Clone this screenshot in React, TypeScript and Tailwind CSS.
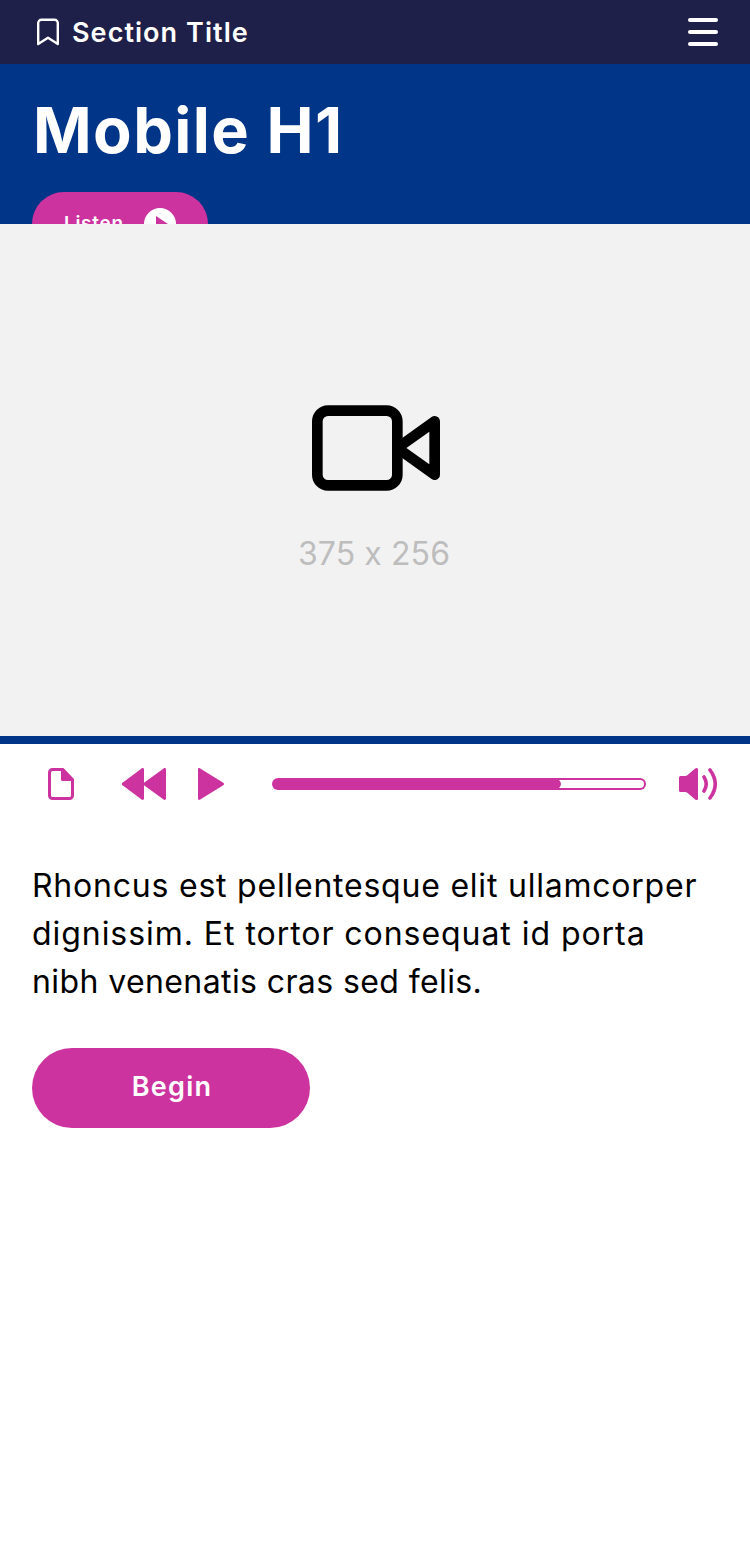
import React from 'react';

function BookmarkIcon() {
  return (
    <svg className="h-7 w-6 shrink-0" viewBox="0 0 24 28" fill="none" stroke="white" strokeWidth="2.4" strokeLinejoin="round">
      <path d="M2.2 26V5a3.2 3.2 0 0 1 3.2-3.2h13.2A3.2 3.2 0 0 1 21.8 5v21L12 19.8Z" />
    </svg>
  );
}

function VideoIcon() {
  return (
    <svg className="h-32 w-32" viewBox="0 0 24 24" fill="none" stroke="black" strokeWidth="2" strokeLinecap="round" strokeLinejoin="round">
      <path d="m23 7-7 5 7 5z" />
      <rect x="1" y="5" width="15" height="14" rx="2" />
    </svg>
  );
}

function PageIcon() {
  return (
    <svg className="h-8 w-[26px]" viewBox="0 0 26 32" fill="none">
      <path d="M4.5 1.5h10.3l9.7 10v16a3 3 0 0 1-3 3h-17a3 3 0 0 1-3-3v-23a3 3 0 0 1 3-3Z" stroke="#cd339f" strokeWidth="3" />
      <path d="M13 1h2.5L25 11v2H14.5a1.5 1.5 0 0 1-1.5-1.5Z" fill="#cd339f" />
    </svg>
  );
}

function RewindIcon() {
  return (
    <svg className="h-8 w-11" viewBox="0 0 44 32" fill="#cd339f">
      <path d="M.5 14.8 19.6.4C20.8-.4 22 .2 22 1.5v13.2L41.6.4C42.8-.4 44 .2 44 1.5v29c0 1.3-1.2 1.9-2.4 1.1L22 17.3v13.2c0 1.3-1.2 1.9-2.4 1.1L.5 17.2a1.5 1.5 0 0 1 0-2.4Z" />
    </svg>
  );
}

function PlayIcon() {
  return (
    <svg className="h-8 w-[26px]" viewBox="0 0 26 32" fill="#cd339f">
      <path d="M0 1.5C0 .2 1 -.4 2.2.4l23.1 14.4a1.4 1.4 0 0 1 0 2.4L2.2 31.6C1 32.4 0 31.8 0 30.5Z" />
    </svg>
  );
}

function VolumeIcon() {
  return (
    <svg className="h-8 w-[39px]" viewBox="0 0 39 32" fill="none">
      <path d="M1.5 8h4.8q1.2 0 2-.8L16.2.6c1.2-1.1 2.8-.5 2.8 1v28.8c0 1.5-1.6 2.1-2.8 1l-7.9-6.6q-.8-.8-2-.8H1.5A1.5 1.5 0 0 1 0 22.5v-13A1.5 1.5 0 0 1 1.5 8Z" fill="#cd339f" />
      <path d="M25 9q4.5 7 0 14M31 2q10.5 14 0 28" stroke="#cd339f" strokeWidth="3.6" strokeLinecap="round" />
    </svg>
  );
}

export default function App() {
  return (
    <main className="flex h-[1560px] w-[750px] flex-col overflow-hidden bg-white font-['Inter',sans-serif] text-black [font-feature-settings:'calt'_0]">
      <header className="flex h-16 shrink-0 items-center justify-between bg-[#1f2049] pr-8 pl-9">
        <div className="flex items-center gap-3">
          <BookmarkIcon />
          <span className="pt-0.5 text-[27px] leading-8 font-semibold tracking-[1.05px] whitespace-nowrap text-white">Section Title</span>
        </div>
        <button aria-label="Menu" className="flex w-[30px] flex-col gap-2">
          <span className="h-1 rounded-full bg-white" />
          <span className="h-1 rounded-full bg-white" />
          <span className="h-1 rounded-full bg-white" />
        </button>
      </header>

      <section className="flex h-40 shrink-0 flex-col items-start overflow-hidden bg-[#003587] px-8 pt-8">
        <h1 className="h-24 shrink-0 pl-px text-[63px] leading-[68px] font-bold tracking-[1.4px] whitespace-nowrap text-white">Mobile H1</h1>
        <button className="flex h-16 w-44 shrink-0 items-center justify-between rounded-full bg-[#cd339f] px-8 text-white">
          <span className="text-[19px] leading-6 font-semibold tracking-[0.7px]">Listen</span>
          <svg className="size-8" viewBox="0 0 32 32">
            <circle cx="16" cy="16" r="16" fill="white" />
            <path d="M12 8v16L24 16Z" fill="#cd339f" />
          </svg>
        </button>
      </section>

      <section className="flex h-[520px] shrink-0 flex-col items-center border-b-8 border-[#003587] bg-[#f2f2f2] pt-40 pl-0.5">
        <VideoIcon />
        <p className="mt-[22px] pr-1 text-[32px] leading-10 font-normal tracking-[0.1px] whitespace-nowrap text-[#bdbdbd]">375 x 256</p>
      </section>

      <section className="flex h-20 shrink-0 items-center pr-8 pl-12">
        <PageIcon />
        <div className="ml-12 flex items-center gap-8">
          <RewindIcon />
          <PlayIcon />
        </div>
        <div className="ml-12 flex h-3 w-[374px] rounded-full bg-[#cd339f] py-0.5 pr-0.5">
          <svg className="ml-[285px] h-2 w-[87px]" viewBox="0 0 87 8">
            <path d="M2 0h81a4 4 0 0 1 0 8H2Q6 4 2 0Z" fill="white" />
          </svg>
        </div>
        <div className="ml-[33px]">
          <VolumeIcon />
        </div>
      </section>

      <section className="flex flex-col items-start px-8 pt-[38px]">
        <p className="flex flex-col text-[32px] leading-[48px] font-normal whitespace-nowrap">
          <span className="tracking-[0.78px]">Rhoncus est pellentesque elit ullamcorper</span>
          <span className="tracking-[0.95px]">dignissim. Et tortor consequat id porta</span>
          <span className="tracking-[0.4px]">nibh venenatis cras sed felis.</span>
        </p>
        <button className="mt-[42px] flex h-20 w-[278px] items-center justify-center rounded-full bg-[#cd339f] pb-0.5 pl-0.5 text-[27px] font-semibold tracking-[1.3px] text-white">Begin</button>
      </section>
    </main>
  );
}
